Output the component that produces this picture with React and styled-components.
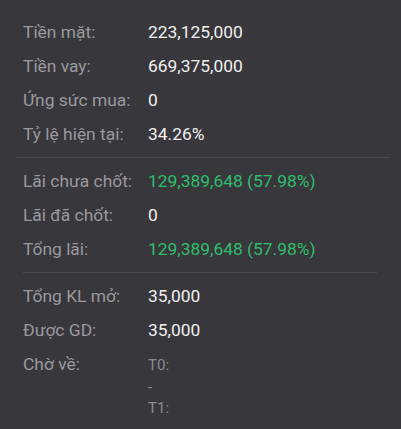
import React from "react";
import styled, { createGlobalStyle } from "styled-components";

const GlobalStyle = createGlobalStyle`
  html, body {
    margin: 0;
    padding: 0;
    background: #38373c;
  }
  body {
    font-family: Roboto, "Liberation Sans", sans-serif;
  }
`;

const sections = [
  [
    { label: "Tiền mặt:", value: "223,125,000" },
    { label: "Tiền vay:", value: "669,375,000" },
    { label: "Ứng sức mua:", value: "0" },
    { label: "Tỷ lệ hiện tại:", value: "34.26%" },
  ],
  [
    { label: "Lãi chưa chốt:", value: "129,389,648 (57.98%)", tone: "up" },
    { label: "Lãi đã chốt:", value: "0" },
    { label: "Tổng lãi:", value: "129,389,648 (57.98%)", tone: "up" },
  ],
  [
    { label: "Tổng KL mở:", value: "35,000" },
    { label: "Được GD:", value: "35,000" },
  ],
];

const AccountSummary = () => {
  return (
    <Panel>
      <Section>
        {sections[0].map((row) => (
          <Row key={row.label}>
            <Label>{row.label}</Label>
            <Value $tone={row.tone}>{row.value}</Value>
          </Row>
        ))}
      </Section>
      <Divider $left={16} $right={11} />
      <Section>
        {sections[1].map((row) => (
          <Row key={row.label}>
            <Label>{row.label}</Label>
            <Value $tone={row.tone}>{row.value}</Value>
          </Row>
        ))}
      </Section>
      <Divider $left={23} $right={24} />
      <Section>
        {sections[2].map((row) => (
          <Row key={row.label}>
            <Label>{row.label}</Label>
            <Value $tone={row.tone}>{row.value}</Value>
          </Row>
        ))}
        <Row $top>
          <Label>Chờ về:</Label>
          <Pending>
            <span>T0:</span>
            <span>-</span>
            <span>T1:</span>
          </Pending>
        </Row>
      </Section>
    </Panel>
  );
};

export default function App() {
  return (
    <>
      <GlobalStyle />
      <AccountSummary />
    </>
  );
}

const Panel = styled.div`
  width: 401px;
  height: 429px;
  box-sizing: border-box;
  padding-top: 15px;
  background: #38373c;
  overflow: hidden;
`;

const Section = styled.div`
  display: flex;
  flex-direction: column;
  padding: 0 23px;
`;

const Row = styled.div`
  display: grid;
  grid-template-columns: 125px 1fr;
  align-items: ${(p) => (p.$top ? "start" : "center")};
  height: 34px;
  font-size: 17.4px;
  line-height: 34px;
  white-space: nowrap;
`;

const Label = styled.span`
  color: #9a999e;
`;

const Value = styled.span`
  color: ${(p) => (p.$tone === "up" ? "#2fbd6d" : "#f0f0f0")};
`;

const Divider = styled.div`
  height: 1px;
  margin: 6px ${(p) => p.$right}px 6px ${(p) => p.$left}px;
  background: #4a494e;
`;

const Pending = styled.div`
  display: flex;
  flex-direction: column;
  padding-top: 8px;
  font-size: 15px;
  line-height: 21.5px;
  color: #8c8b90;
`;
